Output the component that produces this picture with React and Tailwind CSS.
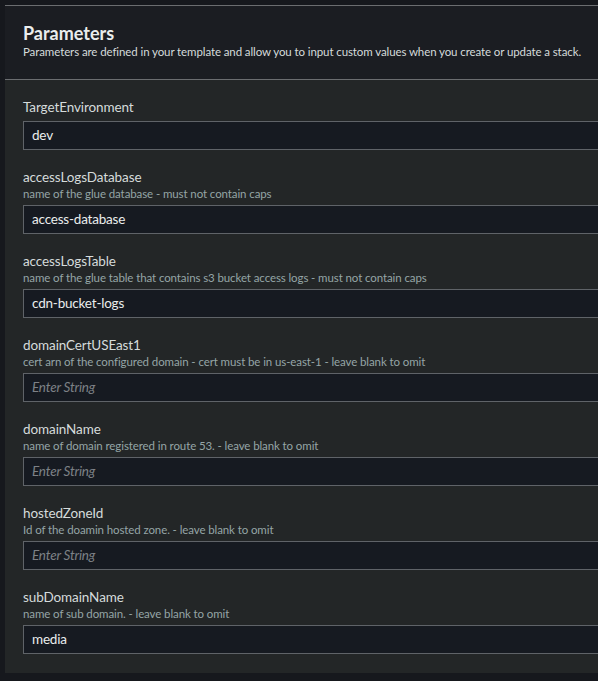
const fields = [
  { name: 'TargetEnvironment', value: 'dev' },
  { name: 'accessLogsDatabase', hint: 'name of the glue database - must not contain caps', value: 'access-database' },
  { name: 'accessLogsTable', hint: 'name of the glue table that contains s3 bucket access logs - must not contain caps', value: 'cdn-bucket-logs' },
  { name: 'domainCertUSEast1', hint: 'cert arn of the configured domain - cert must be in us-east-1 - leave blank to omit', value: '' },
  { name: 'domainName', hint: 'name of domain registered in route 53. - leave blank to omit', value: '' },
  { name: 'hostedZoneId', hint: 'Id of the doamin hosted zone. - leave blank to omit', value: '' },
  { name: 'subDomainName', hint: 'name of sub domain. - leave blank to omit', value: 'media' },
];

export default function App() {
  return (
    <div
      className="w-[598px] h-[681px] overflow-hidden bg-[#16181d] pt-[5px] pl-[5px]"
      style={{ fontFamily: 'Lato, "Open Sans", sans-serif' }}
    >
      <div className="w-[640px] bg-[#232627] border-t border-[#6b6d70]">
        {/* Header */}
        <div className="bg-[#1b1d22] border-b border-[#6b6d70] px-[18px] pt-[16px] pb-[19px]">
          <h2 className="text-[18px] leading-[22px] font-bold text-[#eaeded]">Parameters</h2>
          <p className="text-[11.5px] leading-[16px] tracking-[-0.1px] text-[#d5dbdb] whitespace-nowrap">
            Parameters are defined in your template and allow you to input custom values when you create or update a stack.
          </p>
        </div>

        {/* Fields */}
        <div className="px-[18px] pt-[17px] pb-[19px] flex flex-col gap-[17px]">
          {fields.map((f) => (
            <div key={f.name} className="flex flex-col">
              <label className="text-[13.5px] leading-[20px] tracking-[-0.1px] text-[#d5dbdb]">{f.name}</label>
              {f.hint && (
                <span className="text-[11.5px] leading-[14px] tracking-[-0.1px] text-[#95a5a6] whitespace-nowrap">{f.hint}</span>
              )}
              <div className="mt-[4px] h-[29px] bg-[#161a21] border border-[#5f6368] flex items-center pl-[8px]">
                {f.value ? (
                  <span className="text-[13.5px] tracking-[-0.2px] text-[#eaeded]">{f.value}</span>
                ) : (
                  <span className="text-[13.5px] tracking-[-0.2px] italic text-[#7d8186]">Enter String</span>
                )}
              </div>
            </div>
          ))}
        </div>
      </div>
    </div>
  );
}
